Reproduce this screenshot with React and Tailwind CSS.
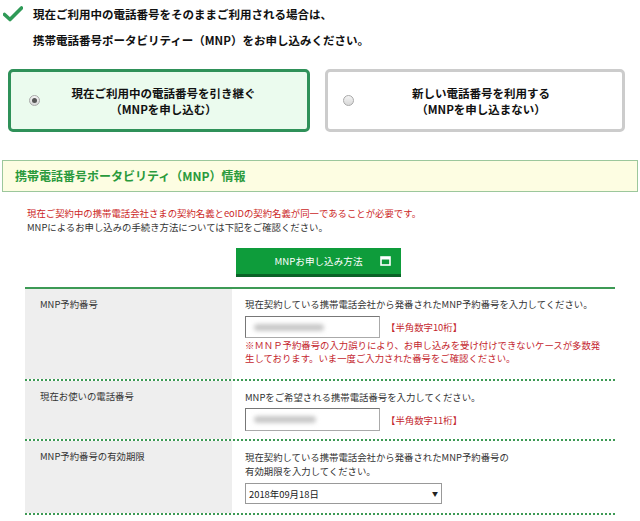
import { useState } from "react"

const jp = { fontFamily: '"Noto Sans CJK JP", "Noto Sans", sans-serif' }

const CheckMark = () => (
  <svg width="20" height="16" viewBox="0 0 20 16" className="mt-[5px]">
    <path d="M1.5 8.5 L7 13.5 L18.5 2" fill="none" stroke="#2f9a57" strokeWidth="3.6" strokeLinecap="round" strokeLinejoin="round" />
  </svg>
)

const Radio = ({ checked }) => (
  <span className="w-[11px] h-[11px] rounded-full border border-[#a9a9a9] bg-gradient-to-b from-[#f4f4f4] to-[#d8d8d8] flex items-center justify-center shrink-0">
    {checked && <span className="w-[5px] h-[5px] rounded-full bg-[#555]"></span>}
  </span>
)

const WindowIcon = () => (
  <svg width="11" height="10" viewBox="0 0 11 10">
    <rect x="1" y="1" width="9" height="8" fill="none" stroke="#fff" strokeWidth="1.6" />
    <rect x="1" y="1" width="9" height="2.5" fill="#fff" />
  </svg>
)

const Blurred = ({ w }) => (
  <span className="block h-[7px] rounded bg-[#c8c8c8] blur-[2px] ml-[8px]" style={{ width: w }}></span>
)

const Row = ({ label, children, pb }) => (
  <div className="flex border-b-2 border-dotted border-[#3d9a55]">
    <div className="w-[207px] bg-[#eeeeee] pl-[15px] pt-[8px] text-[#333]">{label}</div>
    <div className={"flex-1 pl-[13px] pt-[8px] text-[#333] " + pb}>{children}</div>
  </div>
)

export default function App() {
  const [mnp, setMnp] = useState(true)

  return (
    <div className="w-[640px] h-[521px] bg-white overflow-hidden text-[#111]" style={jp}>
      <div className="flex pl-[3px] pt-[1px]">
        <CheckMark />
        <div className="ml-[10px] text-[11.5px] font-bold leading-[26px]">
          <p>現在ご利用中の電話番号をそのままご利用される場合は、</p>
          <p>携帯電話番号ポータビリティー（MNP）をお申し込みください。</p>
        </div>
      </div>

      <div className="flex gap-[15px] ml-[8px] mt-[16px]">
        <button
          onClick={() => setMnp(true)}
          className={"w-[302px] h-[63px] rounded-[5px] border-[3px] flex items-center pl-[18px] pr-[20px] " + (mnp ? "border-[#2f9159] bg-[#ebfbee]" : "border-[#cccccc] bg-white")}
        >
          <Radio checked={mnp} />
          <span className="flex-1 text-center text-[11.5px] font-bold leading-[16px]">
            <span className="block">現在ご利用中の電話番号を引き継ぐ</span>
            <span className="block">（MNPを申し込む）</span>
          </span>
        </button>
        <button
          onClick={() => setMnp(false)}
          className={"w-[300px] h-[63px] rounded-[5px] border-[3px] flex items-center pl-[15px] pr-[14px] " + (!mnp ? "border-[#2f9159] bg-[#ebfbee]" : "border-[#cccccc] bg-white")}
        >
          <Radio checked={!mnp} />
          <span className="flex-1 text-center text-[11.5px] font-bold leading-[16px]">
            <span className="block">新しい電話番号を利用する</span>
            <span className="block">（MNPを申し込まない）</span>
          </span>
        </button>
      </div>

      <div className="mx-[2px] mt-[28px] h-[32px] border border-[#9cc79c] bg-[#fdfde2] flex items-center pl-[12px]">
        <h2 className="text-[12px] font-bold text-[#2a9a3c]">携帯電話番号ポータビリティ（MNP）情報</h2>
      </div>

      <div className="ml-[27px] mt-[14px] text-[9.4px] leading-[14px]">
        <p className="text-[#cc1f1f]">現在ご契約中の携帯電話会社さまの契約名義とeoIDの契約名義が同一であることが必要です。</p>
        <p className="text-[#333]">MNPによるお申し込みの手続き方法については下記をご確認ください。</p>
      </div>

      <div className="flex justify-center mt-[14px] pr-[3px]">
        <button className="w-[165px] h-[29px] bg-[#0e9c3b] border-b-[3px] border-[#0a6327] text-white text-[9.6px] flex items-center justify-center relative">
          <span>MNPお申し込み方法</span>
          <span className="absolute right-[10px] top-[8px]"><WindowIcon /></span>
        </button>
      </div>

      <div className="mx-[25px] mt-[10px] text-[9.4px] leading-[14px] border-t-2 border-[#3d9a55]">
        <Row label="MNP予約番号" pb="pb-[14px]">
          <p>現在契約している携帯電話会社から発番されたMNP予約番号を入力してください。</p>
          <div className="flex items-center mt-[5px]">
            <div className="w-[135px] h-[22px] border border-[#aaa] border-t-[#777] border-l-[#777] bg-white flex items-center">
              <Blurred w={70} />
            </div>
            <span className="ml-[6px] text-[#c4262e]">【半角数字10桁】</span>
          </div>
          <p className="mt-[1px] text-[#c4262e] leading-[13px]">※ＭＮＰ予約番号の入力誤りにより、お申し込みを受け付けできないケースが多数発<br />生しております。いま一度ご入力された番号をご確認ください。</p>
        </Row>
        <Row label="現在お使いの電話番号" pb="pb-[8px]">
          <p className="mt-[1px]">MNPをご希望される携帯電話番号を入力してください。</p>
          <div className="flex items-center mt-[4px]">
            <div className="w-[135px] h-[23px] border border-[#aaa] border-t-[#777] border-l-[#777] bg-white flex items-center">
              <Blurred w={62} />
            </div>
            <span className="ml-[6px] text-[#c4262e]">【半角数字11桁】</span>
          </div>
        </Row>
        <Row label="MNP予約番号の有効期限" pb="pb-[9px]">
          <p className="mt-[1px]">現在契約している携帯電話会社から発番されたMNP予約番号の<br />有効期限を入力してください。</p>
          <div className="mt-[5px] w-[197px] h-[21px] border border-[#999] bg-white flex items-center justify-between px-[3px] text-[#222]">
            <span>2018年09月18日</span>
            <span className="text-[6px]">▼</span>
          </div>
        </Row>
      </div>
    </div>
  )
}
